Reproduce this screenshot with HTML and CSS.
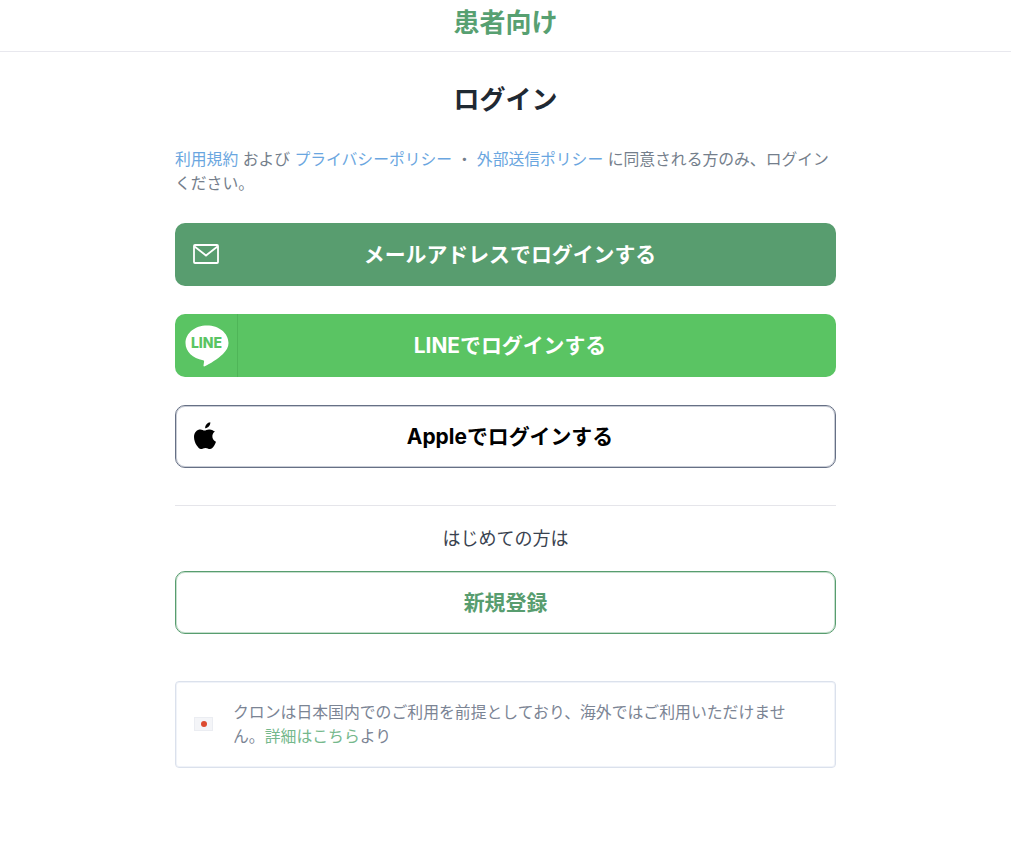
FILE: index.html
```html
<!DOCTYPE html>
<html lang="ja">
<head>
    <meta charset="UTF-8">
    <meta name="viewport" content="width=device-width, initial-scale=1.0">
    <title>ログイン</title>
    <link rel="stylesheet" href="styles.css">
</head>
<body>

    <header class="site-header">患者向け</header>

    <main class="login-container">
        <h1 class="login-title">ログイン</h1>

        <p class="terms">
            <a href="#">利用規約</a> および <a href="#">プライバシーポリシー</a> ・ <a href="#">外部送信ポリシー</a> に同意される方のみ、ログインください。
        </p>

        <a href="#" class="btn btn-icon-left btn-mail">
            <svg class="btn-icon mail-icon" viewBox="0 0 26 20" width="26" height="20">
                <rect x="1" y="1" width="24" height="18" rx="1" fill="none" stroke="#fff" stroke-width="1.8"/>
                <path d="M1.5 2.500 L13 11.500 L24.500 2.500" fill="none" stroke="#fff" stroke-width="1.8"/>
            </svg>
            メールアドレスでログインする
        </a>

        <a href="#" class="btn btn-icon-left btn-line">
            <span class="line-badge">
                <svg viewBox="0 0 44 42" width="44" height="42">
                    <path d="M22 .5C10 .5.5 8.200.5 18c0 8.600 7.300 15.600 17.500 17.200 1 .2 1.300.8 1 1.800l-.5 3.500c-.1.800.5 1.200 1.300.8 5-2.500 13-7.300 18.200-12.300C41.500 25.500 43.500 22 43.500 18 43.500 8.200 34 .5 22 .5z" fill="#fff"/>
                    <text x="21.500" y="23" class="line-text">LINE</text>
                </svg>
            </span>
            LINEでログインする
        </a>

        <a href="#" class="btn btn-icon-left btn-apple">
            <svg class="btn-icon apple-icon" viewBox="0 0 814 1000" width="22" height="27">
                <path d="M788 341c-6 4-108 62-108 190 0 148 130 200 134 202-1 3-21 72-69 142-43 62-88 124-156 124s-86-40-165-40c-77 0-104 41-166 41s-106-57-156-127C44 791 0 671 0 557c0-183 119-280 236-280 62 0 114 41 153 41 37 0 95-43 166-43 27 0 124 2 188 66h45zM554 161c29-35 50-83 50-131 0-7-1-14-2-19-48 2-104 32-138 72-27 30-52 79-52 127 0 8 1 15 2 18 3 1 8 1 13 1 43 0 96-29 127-68z" fill="#000"/>
            </svg>
            Appleでログインする
        </a>

        <div class="divider"></div>
        <p class="first-time">はじめての方は</p>

        <a href="#" class="btn btn-register">新規登録</a>

        <div class="notice">
            <span class="flag"><span class="flag-dot"></span></span>
            <p class="notice-text">クロンは日本国内でのご利用を前提としており、海外ではご利用いただけません。<a href="#">詳細はこちら</a>より</p>
        </div>
    </main>

</body>
</html>
```

FILE: styles.css
```css
body {
    margin: 0;
    padding: 0;
    width: 1011px;
    background-color: #fff;
    color: #1f2933;
    font-family: Inter, "Noto Sans CJK JP", sans-serif;
}

a {
    text-decoration: none;
}

.site-header {
    height: 51px;
    border-bottom: 1px solid #e8e8ee;
    text-align: center;
    font-size: 26px;
    font-weight: 700;
    line-height: 45px;
    color: #57a071;
}

.login-container {
    width: 661px;
    margin: 0 auto;
}

.login-title {
    margin: 27px 0 0;
    font-size: 26px;
    font-weight: 700;
    line-height: 42px;
    text-align: center;
}

.terms {
    margin: 27px 0 0;
    font-size: 15.800px;
    line-height: 24px;
    color: #747e8b;
}

.terms a {
    color: #6aa6e0;
}

.btn {
    display: flex;
    align-items: center;
    justify-content: center;
    position: relative;
    height: 63px;
    box-sizing: border-box;
    margin-top: 28px;
    padding-bottom: 4px;
    border-radius: 10px;
    font-size: 20.900px;
    font-weight: 700;
}

.btn-icon-left {
    padding-left: 9px;
}

.btn-icon {
    position: absolute;
    left: 18px;
}

.btn-mail {
    margin-top: 27px;
    background-color: #589d6f;
    color: #fff;
}

.mail-icon {
    top: 21px;
}

.btn-line {
    background-color: #5ac463;
    color: #fff;
}

.line-badge {
    position: absolute;
    left: 0;
    top: 0;
    bottom: 0;
    width: 63px;
    border-right: 1px solid #4fb558;
    display: flex;
    align-items: center;
    padding-left: 10px;
    box-sizing: border-box;
}

.line-text {
    font-family: Inter, sans-serif;
    font-size: 14px;
    font-weight: 800;
    fill: #5ac463;
    text-anchor: middle;
}

.btn-apple {
    background-color: #fff;
    border: 1px solid #667085;
    box-shadow: inset 0 0 0 1px #c9cdd6;
    color: #000;
}

.apple-icon {
    top: 16px;
}

.divider {
    margin-top: 37px;
    border-top: 1px solid #e5e5ea;
}

.first-time {
    margin: 21px 0 0;
    font-size: 18px;
    line-height: 24px;
    text-align: center;
    color: #3a4350;
}

.btn-register {
    margin-top: 20px;
    background-color: #fff;
    border: 1px solid #589d6f;
    box-shadow: inset 0 0 0 1px #c6dfce;
    color: #589d6f;
}

.notice {
    display: flex;
    align-items: center;
    height: 87px;
    box-sizing: border-box;
    margin-top: 47px;
    padding: 0 32px 0 18px;
    border: 1px solid #dbe1ec;
    box-shadow: inset 0 0 0 1px #f0f3f9;
    border-radius: 4px;
    gap: 20px;
}

.flag {
    flex: none;
    display: flex;
    align-items: center;
    justify-content: center;
    width: 19px;
    height: 14px;
    margin-top: -1px;
    background-color: #f4f5f8;
    box-shadow: inset 0 0 0 1px #ebedf2;
}

.flag-dot {
    width: 6px;
    height: 6px;
    border-radius: 50%;
    background-color: #dc4a30;
}

.notice-text {
    margin: 0;
    font-size: 15.850px;
    line-height: 24px;
    color: #7b8494;
}

.notice-text a {
    color: #75b88c;
}
```
